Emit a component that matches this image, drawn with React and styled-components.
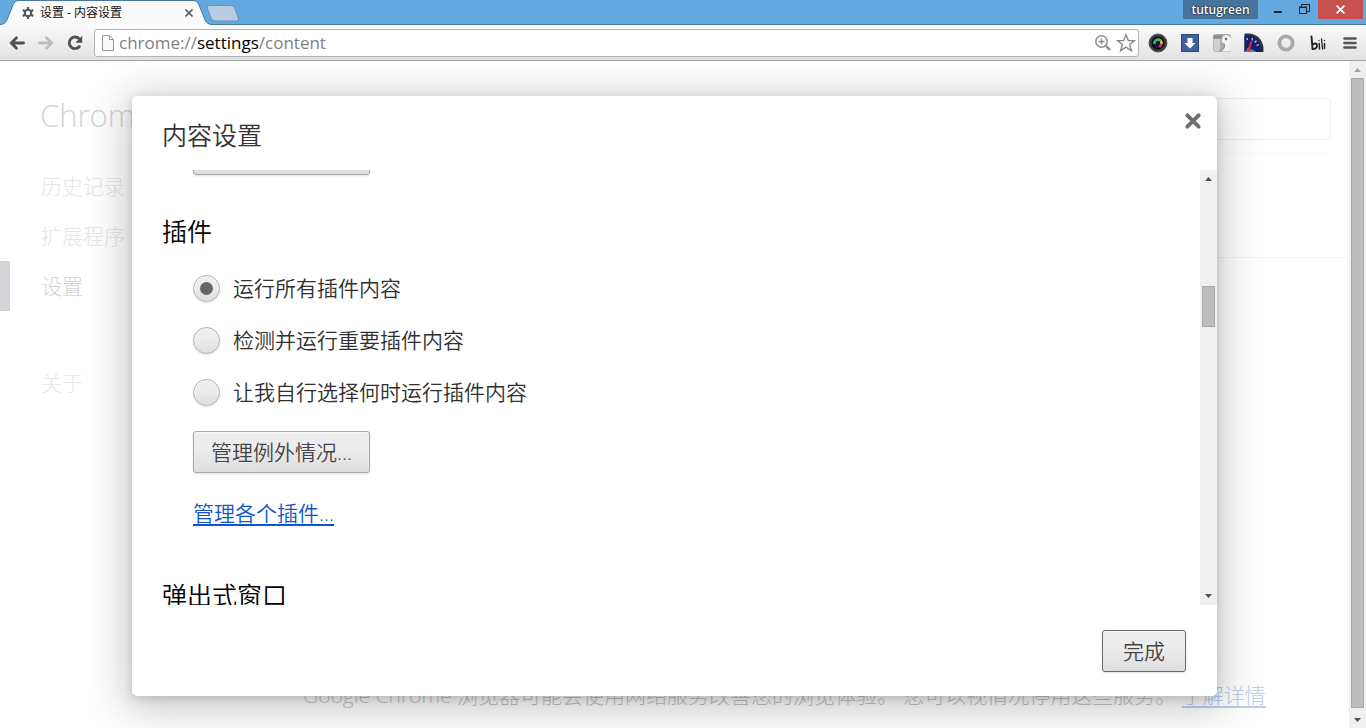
import React from "react";
import styled, { createGlobalStyle, css } from "styled-components";

const GlobalStyle = createGlobalStyle`
  *, *::before, *::after { box-sizing: border-box; }
  body { margin: 0; background: #fff; overflow: hidden; }
  body, button, input {
    font-family: "Open Sans", "Noto Sans CJK SC", sans-serif;
    font-weight: 300;
  }
  h1, h2, p, ul { margin: 0; padding: 0; font-weight: inherit; }
`;

const Browser = styled.div`
  height: 100vh;
  display: flex;
  flex-direction: column;
  overflow: hidden;
`;

/* ---------- window frame ---------- */
const TitleBar = styled.header`
  flex: none;
  height: 25px;
  display: flex;
  align-items: flex-start;
  background: #63a8de;
  border-bottom: 1px solid #47799f;
`;

const Tab = styled.div`
  position: relative;
  width: 208px;
  height: 25px;
  padding: 1px 11px 0 22px;
  display: flex;
  align-items: center;
  gap: 6px;
  font-size: 12px;
  font-weight: 400;
  color: #111;
  > * { position: relative; }
`;

const TabShape = styled.svg`
  && { position: absolute; }
  left: 0;
  top: 0;
`;

const TabTitle = styled.span`
  flex: 1;
  white-space: nowrap;
  line-height: 16px;
`;

const BareButton = styled.button`
  border: 0;
  padding: 0;
  background: none;
  display: flex;
  align-items: center;
  justify-content: center;
  flex: none;
`;

const TabClose = styled(BareButton)`
  width: 16px;
  height: 16px;
`;

const NewTab = styled(BareButton)`
  margin: 5px 0 0 -2px;
`;

const WindowControls = styled.div`
  margin-left: auto;
  margin-right: 3px;
  display: flex;
  align-items: flex-start;
`;

const UserBadge = styled.button`
  width: 75px;
  height: 19px;
  margin-right: 6px;
  padding: 0;
  border: 0;
  background: #47749b;
  color: #fff;
  font-size: 12px;
  font-weight: 600;
  line-height: 19px;
  text-shadow: 0 0 2px #112, 0 0 1px #334;
`;

const WindowButton = styled(BareButton)`
  width: ${(p) => (p.$close ? 45 : 27)}px;
  height: 19px;
  background: ${(p) => (p.$close ? "#c75050" : "transparent")};
`;

const Toolbar = styled.div`
  flex: none;
  height: 36px;
  padding: 0 6px 0 7px;
  display: flex;
  align-items: center;
  background: linear-gradient(#fafafa, #e2e2e2);
  border-bottom: 1px solid #a5a5a5;
`;

const NavButton = styled(BareButton)`
  width: 20px;
  height: 20px;
  margin-right: 9px;
`;

const Omnibox = styled.div`
  flex: 1;
  height: 28px;
  padding: 0 2px 0 6px;
  display: flex;
  align-items: center;
  gap: 4px;
  background: #fff;
  border: 1px solid #b4b4b4;
  border-radius: 3px;
`;

const Address = styled.div`
  flex: 1;
  font-size: 17px;
  font-weight: 400;
  line-height: 22px;
  color: #808080;
  b { font-weight: 400; color: #000; }
`;

const Extensions = styled.div`
  display: flex;
  gap: 12px;
  margin-left: 9px;
`;

const ExtensionButton = styled(BareButton)`
  width: 20px;
  height: 20px;
`;

/* ---------- scroll bars ---------- */
const ScrollTrack = styled.div`
  flex: none;
  width: 17px;
  display: flex;
  flex-direction: column;
  background: #f0f0f0;
`;

const ScrollArrow = styled(BareButton)`
  height: 17px;
`;

const ScrollSpace = styled.div`
  flex: ${(p) => p.$share} 0 0;
`;

const ScrollThumb = styled.div`
  flex: ${(p) => p.$share} 0 0;
  margin: 0 2px;
  background: #bcbcbc;
  border: 1px solid #a8a8a8;
`;

/* ---------- settings page ---------- */
const Viewport = styled.div`
  flex: 1;
  min-height: 0;
  display: flex;
`;

const Page = styled.div`
  position: relative;
  flex: 1;
  min-width: 0;
  display: flex;
`;

const Sidebar = styled.nav`
  width: 272px;
  flex: none;
  padding-top: 31px;
`;

const Brand = styled.h1`
  margin-bottom: 23px;
  padding-left: 40px;
  font-size: 31px;
  line-height: 46px;
  color: #d3d4d8;
`;

const NavLink = styled.a`
  display: block;
  height: 50px;
  margin-top: ${(p) => (p.$apart ? 47 : 0)}px;
  padding-left: ${(p) => (p.$current ? 31 : 41)}px;
  border-left: ${(p) => (p.$current ? "10px solid #d3d4d8" : "0")};
  font-size: 21px;
  line-height: 50px;
  text-decoration: none;
  color: ${(p) => (p.$current ? "#d3d4d8" : "#e6e6e6")};
`;

const Main = styled.main`
  flex: 1;
  min-width: 0;
  display: flex;
  flex-direction: column;
`;

const MainHeader = styled.div`
  height: 93px;
  margin-right: 18px;
  padding-top: 37px;
  display: flex;
  justify-content: flex-end;
  align-items: flex-start;
  border-bottom: 1px solid #fafafa;
`;

const SearchInput = styled.input`
  width: 280px;
  height: 42px;
  padding: 0 8px;
  border: 1px solid #eee;
  border-radius: 4px;
  outline: 0;
`;

const SectionRule = styled.div`
  height: 104px;
  border-bottom: 1px solid #f3f3f3;
`;

const PrivacyNote = styled.p`
  margin: auto 0 18px 31px;
  font-size: 21px;
  line-height: 30px;
  white-space: nowrap;
  color: #c6c6c6;
  a { color: #bccdf1; text-underline-offset: 3px; text-decoration-thickness: 2px; }
`;

/* ---------- dialog ---------- */
const Overlay = styled.div`
  position: absolute;
  inset: 0;
  padding: 35px 132px 32px;
  display: flex;
`;

const Dialog = styled.section`
  flex: 1;
  min-width: 0;
  display: flex;
  flex-direction: column;
  background: #fff;
  border-radius: 5px;
  box-shadow: 0 7px 40px 8px rgba(0, 0, 0, 0.2), 0 3px 10px rgba(0, 0, 0, 0.15);
`;

const DialogHeader = styled.div`
  flex: none;
  height: 74px;
  padding: 14px 14px 0 30px;
  display: flex;
  justify-content: space-between;
  align-items: flex-start;
`;

const headingText = css`
  font-size: 25px;
  font-weight: 350;
  line-height: 50px;
`;

const DialogTitle = styled.h1`
  ${headingText}
  color: #333;
`;

const DialogClose = styled(BareButton)`
  width: 20px;
  height: 22px;
`;

const DialogBody = styled.div`
  flex: 1;
  min-height: 0;
  display: flex;
`;

const ScrollContent = styled.div`
  flex: 1;
  min-width: 0;
  padding-left: 30px;
  overflow: hidden;
`;

const Section = styled.div`
  padding-left: 31px;
`;

const PreviousSection = styled(Section)`
  margin-top: -37px;
`;

const SectionTitle = styled.h2`
  ${headingText}
  margin-top: ${(p) => p.$gap}px;
  margin-bottom: 6px;
  color: #000;
`;

const Option = styled.label`
  height: 52px;
  display: flex;
  align-items: center;
  gap: 13px;
  font-size: 21px;
  font-weight: 350;
  line-height: 30px;
  color: #303030;
`;

const surface = css`
  background: linear-gradient(#ededed 38%, #dedede);
  box-shadow: 0 1px 2px rgba(0, 0, 0, 0.12), inset 0 1px 2px rgba(255, 255, 255, 0.75);
`;

const Radio = styled.input`
  ${surface}
  appearance: none;
  width: 27px;
  height: 27px;
  margin: 0;
  display: grid;
  place-content: center;
  border: 1px solid #b0b0b0;
  border-radius: 50%;
  &:checked::before {
    content: "";
    width: 13px;
    height: 13px;
    border-radius: 50%;
    background: #666;
  }
`;

const PushButton = styled.button`
  ${surface}
  display: block;
  height: 42px;
  width: ${(p) => p.$width}px;
  padding: 0;
  border: 1px solid ${(p) => (p.$primary ? "#666" : "#a8a8a8")};
  border-radius: 3px;
  font-size: 21px;
  font-weight: 350;
  line-height: 40px;
  color: #444;
  text-shadow: 0 1px 0 #f0f0f0;
`;

const PluginButton = styled(PushButton)`
  margin-top: 13px;
`;

const PluginLink = styled.a`
  display: block;
  width: max-content;
  margin-top: 25px;
  font-size: 21px;
  font-weight: 350;
  line-height: 30px;
  color: #1155cc;
  text-decoration-thickness: 2px;
  text-underline-offset: 3px;
`;

const DialogFooter = styled.div`
  flex: none;
  height: 91px;
  padding: 25px 31px 0;
  display: flex;
  justify-content: flex-end;
`;

/* ---------- icons ---------- */
const GearIcon = () => (
  <svg width="12" height="12" viewBox="0 0 12 12">
    <circle cx="6" cy="6" r="3.2" fill="none" stroke="#555" strokeWidth="2" />
    {[0, 60, 120, 180, 240, 300].map((a) => (
      <rect key={a} x="4.9" y="0" width="2.2" height="2.6" fill="#555" transform={`rotate(${a} 6 6)`} />
    ))}
  </svg>
);

const Cross = ({ size, color, width, round }) => (
  <svg width={size} height={size} viewBox="0 0 10 10">
    <path d="M1.5 1.5 8.5 8.5M8.5 1.5 1.5 8.5" stroke={color} strokeWidth={width} strokeLinecap={round ? "round" : "butt"} />
  </svg>
);

const ArrowIcon = ({ color, flip }) => (
  <svg width="18" height="16" viewBox="0 0 18 16">
    <g transform={flip ? "translate(18 0) scale(-1 1)" : undefined}>
      <path d="M8.500 2.800 3.300 8l5.200 5.200M4 8H15.500" fill="none" stroke={color} strokeWidth="2.800" strokeLinecap="round" />
    </g>
  </svg>
);

const ReloadIcon = () => (
  <svg width="18" height="18" viewBox="0 0 18 18">
    <path d="M13.600 5.200A5.800 5.800 0 1 0 14 11.800" fill="none" stroke="#505050" strokeWidth="2.800" />
    <path d="M16.200 1.800v7H9.400z" fill="#505050" />
  </svg>
);

const PageIcon = () => (
  <svg width="14" height="18" viewBox="0 0 14 18">
    <path d="M1.5 1.5h7l4 4v11h-11z" fill="#fafafa" stroke="#999" />
    <path d="M8.5 1.5v4h4" fill="none" stroke="#999" />
  </svg>
);

const ZoomIcon = () => (
  <svg width="18" height="18" viewBox="0 0 18 18" fill="none" stroke="#8a8a8a">
    <circle cx="7.5" cy="7.5" r="5.7" strokeWidth="1.5" />
    <path d="M12 12l4 4" strokeWidth="2.4" />
    <path d="M4.5 7.5h6M7.5 4.5v6" strokeWidth="1.4" />
  </svg>
);

const StarIcon = () => (
  <svg width="20" height="20" viewBox="0 0 20 20">
    <path d="M10 1.6l2.3 6h6.3l-5 3.9 1.8 6.3L10 14.1l-5.4 3.7 1.8-6.3-5-3.9h6.3z" fill="#fff" stroke="#858585" strokeWidth="1.3" />
  </svg>
);

const LensIcon = () => (
  <svg width="20" height="20" viewBox="0 0 20 20">
    <circle cx="10" cy="10" r="9" fill="#3a3a3a" stroke="#555" />
    <circle cx="10" cy="10" r="6.500" fill="#0a0a0a" />
    <g fill="none" strokeWidth="2.800">
      <path d="M6.600 11A3.500 3.500 0 0 1 9 6.800" stroke="#19b8b8" />
      <path d="M9 6.800a3.500 3.500 0 0 1 3.600.8" stroke="#48c837" />
      <path d="M12.600 7.600a3.500 3.500 0 0 1 .7 3.400" stroke="#e8c21c" />
      <path d="M13.300 11a3.500 3.500 0 0 1-2.300 2.300" stroke="#e02c7c" />
      <path d="M11 13.300a3.500 3.500 0 0 1-4.400-2.300" stroke="#241a50" />
    </g>
    <circle cx="10" cy="10" r="2" fill="#151520" />
  </svg>
);

const DownloadIcon = () => (
  <svg width="20" height="20" viewBox="0 0 20 20">
    <rect x="1" y="1" width="18" height="18" fill="#fff" />
    <rect x="1.500" y="1.500" width="17" height="17" fill="#3f5f9f" stroke="#2c4880" />
    <path d="M7.500 5h5v5H15.500L10 15.500 4.500 10h3z" fill="#fff" />
  </svg>
);

const BirdIcon = () => (
  <svg width="20" height="20" viewBox="0 0 20 20">
    <rect x="1" y="1" width="18" height="18" rx="3" fill="#a8a8a8" />
    <path d="M1.500 6h7q-1 6 0 8l-2 4.500H4.500q-3 0-3-3z" fill="#cfcfcf" />
    <path d="M1.500 2.500h9l-1 3h-8z" fill="#8d8d8d" />
    <path d="M10 7q0-5 5-5 4 1 4 5v8q0 3.500-3.500 3.500H9q5-4 3-8-2.500-.5-2-3.500z" fill="#f2f2f2" />
    <path d="M12 10.500q2 4-3 8" fill="none" stroke="#888" />
    <circle cx="14" cy="6" r="1.200" fill="#666" />
  </svg>
);

const GaugeIcon = () => (
  <svg width="20" height="20" viewBox="0 0 20 20">
    <path d="M.5 .5h5q12 1.500 14 14v4.500H.5z" fill="#2e3338" />
    <path d="M.5 2.500h4q11 1 13 13v3.500H.5z" fill="#161e70" />
    <path d="M.5 19q5-6 12 0z" fill="#3f86c8" />
    <path d="M8.500 5l-.6 2.500M12.500 7.500l-1.800 2M15 11.500l-2.500 1M3 5l.5 2" stroke="#c5cdf0" strokeWidth="1.200" />
    <path d="M7.500 8.500 5 16" stroke="#f02a36" strokeWidth="2" />
    <circle cx="4.500" cy="16.500" r="1.900" fill="#f02a36" />
  </svg>
);

const RingIcon = () => (
  <svg width="20" height="20" viewBox="0 0 20 20">
    <circle cx="10" cy="10" r="6.700" fill="none" stroke="#aaa" strokeWidth="3.800" />
  </svg>
);

const BiliIcon = () => (
  <svg width="20" height="20" viewBox="0 0 20 20" fill="none" stroke="#222" strokeLinecap="round">
    <path d="M3.500 3.500l1 12.500M4.500 11.500q4.500-2.500 4.500 1T4.500 16" strokeWidth="1.900" />
    <path d="M11.200 10.500l.3 5.500M16.500 10.500v5" strokeWidth="1.500" />
    <path d="M13.500 6l1 10M11 7.500v.2M16.500 7.500v.2" strokeWidth="1.300" />
  </svg>
);

const MenuIcon = () => (
  <svg width="14" height="14" viewBox="0 0 14 14">
    <path d="M1.500 2.500h11M1.500 7h11M1.500 11.500h11" stroke="#555" strokeWidth="2.600" strokeLinecap="round" />
  </svg>
);

const Triangle = ({ down, color = "#505050" }) => (
  <svg width="7" height="4" viewBox="0 0 7 4">
    <path d={down ? "M0 0h7L3.500 4z" : "M0 4h7L3.500 0z"} fill={color} />
  </svg>
);

const extensions = [
  ["拾色器", LensIcon],
  ["下载", DownloadIcon],
  ["小鸟", BirdIcon],
  ["测速", GaugeIcon],
  ["圆环", RingIcon],
  ["bili", BiliIcon],
  ["菜单", MenuIcon],
];

const navItems = [
  { text: "历史记录" },
  { text: "扩展程序" },
  { text: "设置", current: true },
  { text: "关于", apart: true },
];

const pluginOptions = ["运行所有插件内容", "检测并运行重要插件内容", "让我自行选择何时运行插件内容"];

const ScrollBar = ({ before, thumb, after, atTop }) => (
  <ScrollTrack>
    <ScrollArrow aria-label="向上滚动"><Triangle color={atTop ? "#a3a3a3" : undefined} /></ScrollArrow>
    <ScrollSpace $share={before} />
    <ScrollThumb $share={thumb} />
    <ScrollSpace $share={after} />
    <ScrollArrow aria-label="向下滚动"><Triangle down /></ScrollArrow>
  </ScrollTrack>
);

export default function App() {
  return (
    <Browser>
      <GlobalStyle />
      <TitleBar>
        <Tab>
          <TabShape width="212" height="25" viewBox="0 0 212 25">
            <path d="M0 25V24.500Q5 24.500 7 20L13 5Q14.500 .5 19 .5H193Q197.500 .5 199 5L205 20Q207 24.500 212 24.500V25z" fill="#fafafa" />
            <path d="M0 24.500Q5 24.500 7 20L13 5Q14.500 .5 19 .5H193Q197.500 .5 199 5L205 20Q207 24.500 212 24.500" fill="none" stroke="#47799f" />
          </TabShape>
          <GearIcon />
          <TabTitle>设置 - 内容设置</TabTitle>
          <TabClose aria-label="关闭标签页"><Cross size={10} color="#555" width={1.7} /></TabClose>
        </Tab>
        <NewTab aria-label="新标签页">
          <svg width="34" height="17" viewBox="0 0 34 17">
            <path d="M3 .5h22q3 0 4 3l3.500 10q1 2.500-2 2.500H9q-3 0-4-3L1 3Q.5.5 3 .5z" fill="#b9cde2" stroke="#5b90bd" />
          </svg>
        </NewTab>
        <WindowControls>
          <UserBadge>tutugreen</UserBadge>
          <WindowButton aria-label="最小化">
            <svg width="8" height="8"><path d="M0 5h8v2H0z" fill="#222" /></svg>
          </WindowButton>
          <WindowButton aria-label="还原">
            <svg width="11" height="11" viewBox="0 0 11 11" fill="none" stroke="#222">
              <path d="M.5 3.500h7v6h-7zM0 3h8M2.500 3V.5h8v7H8" />
            </svg>
          </WindowButton>
          <WindowButton $close aria-label="关闭"><Cross size={11} color="#fff" width={1.6} /></WindowButton>
        </WindowControls>
      </TitleBar>
      <Toolbar>
        <NavButton aria-label="后退"><ArrowIcon color="#505050" /></NavButton>
        <NavButton aria-label="前进"><ArrowIcon color="#bdbdbd" flip /></NavButton>
        <NavButton aria-label="重新加载"><ReloadIcon /></NavButton>
        <Omnibox>
          <PageIcon />
          <Address>chrome://<b>settings</b>/content</Address>
          <ZoomIcon />
          <StarIcon />
        </Omnibox>
        <Extensions>
          {extensions.map(([name, Icon]) => (
            <ExtensionButton key={name} aria-label={name}><Icon /></ExtensionButton>
          ))}
        </Extensions>
      </Toolbar>
      <Viewport>
        <Page>
          <Sidebar>
            <Brand>Chrome</Brand>
            {navItems.map((item) => (
              <NavLink key={item.text} href="#" $current={item.current} $apart={item.apart}>{item.text}</NavLink>
            ))}
          </Sidebar>
          <Main>
            <MainHeader><SearchInput type="search" aria-label="在设置中搜索" /></MainHeader>
            <SectionRule />
            <PrivacyNote>
              Google Chrome 浏览器可能会使用网络服务改善您的浏览体验。 您可以视情况停用这些服务。 <a href="#">了解详情</a>
            </PrivacyNote>
          </Main>
          <Overlay>
            <Dialog role="dialog" aria-labelledby="dialog-title">
              <DialogHeader>
                <DialogTitle id="dialog-title">内容设置</DialogTitle>
                <DialogClose aria-label="关闭对话框"><Cross size={16} color="#6e6e6e" width={2.4} round /></DialogClose>
              </DialogHeader>
              <DialogBody>
                <ScrollContent>
                  <PreviousSection>
                    <PushButton $width={177} aria-label="管理例外情况" />
                  </PreviousSection>
                  <SectionTitle $gap={31}>插件</SectionTitle>
                  <Section>
                    {pluginOptions.map((text, i) => (
                      <Option key={text}>
                        <Radio type="radio" name="plugins" defaultChecked={i === 0} />
                        {text}
                      </Option>
                    ))}
                    <PluginButton $width={177}>管理例外情况...</PluginButton>
                    <PluginLink href="#">管理各个插件...</PluginLink>
                  </Section>
                  <SectionTitle $gap={42}>弹出式窗口</SectionTitle>
                </ScrollContent>
                <ScrollBar before={99} thumb={40} after={262} />
              </DialogBody>
              <DialogFooter>
                <PushButton $width={84} $primary>完成</PushButton>
              </DialogFooter>
            </Dialog>
          </Overlay>
        </Page>
        <ScrollBar before={0} thumb={630} after={3} atTop />
      </Viewport>
    </Browser>
  );
}
